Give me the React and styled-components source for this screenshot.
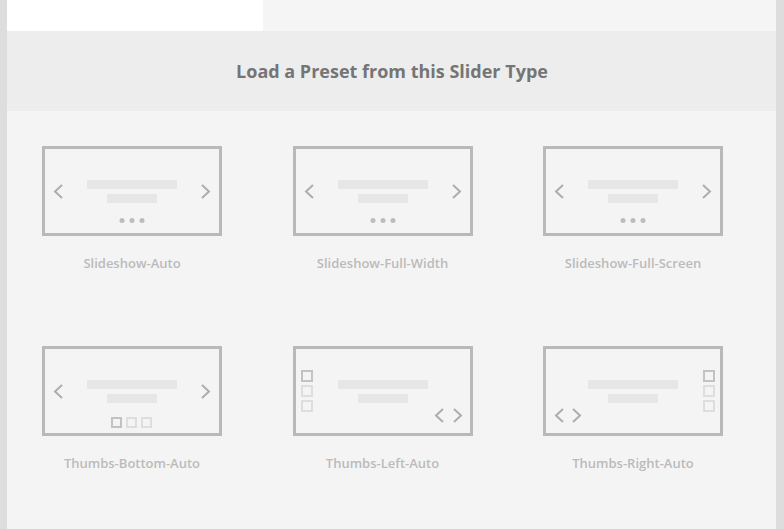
import React from "react";
import styled, { createGlobalStyle } from "styled-components";

const Global = createGlobalStyle`
    html, body {
        margin: 0;
        padding: 0;
        background: #dddddd;
        font-family: "Open Sans", "Liberation Sans", sans-serif;
    }
`

const Panel = styled.div`
    margin: 0 8px 0 7px;
    height: 529px;
    background: #f4f4f4;
    display: flex;
    flex-direction: column;
`
const TabRow = styled.div`
    height: 31px;
    display: flex;
    background: #f5f5f5;
`
const Tab = styled.div`
    width: 256px;
    background: #ffffff;
`
const Header = styled.div`
    height: 80px;
    background: #ededed;
    display: flex;
    align-items: center;
    justify-content: center;
`
const Title = styled.h2`
    margin: 0;
    font-size: 18px;
    font-weight: 700;
    color: #757575;
    padding-left: 1px;
`
const Grid = styled.div`
    display: grid;
    grid-template-columns: repeat(3, 180px);
    column-gap: 70.5px;
    row-gap: 74px;
    padding: 35px 0 0 35px;
`
const Card = styled.div`
    display: flex;
    flex-direction: column;
    align-items: center;
    cursor: pointer;
`
const Frame = styled.div`
    width: 174px;
    height: 84px;
    border: 3px solid #b9b9b9;
    svg {
        display: block;
    }
`
const Label = styled.div`
    margin-top: 18px;
    font-size: 13px;
    line-height: 18px;
    font-weight: 600;
    color: #bbbbbb;
`

const BAR = "#e6e6e6";
const ARROW = "#adadad";

const Chevron = ({ x, y, dir }) => (
    <path
        d={dir === "left" ? `M${x + 8} ${y} L${x + 1} ${y + 6.5} L${x + 8} ${y + 13}` : `M${x} ${y} L${x + 7} ${y + 6.5} L${x} ${y + 13}`}
        fill="none"
        stroke={ARROW}
        strokeWidth="2"
    />
);

const Thumb = ({ x, y, size, active }) => (
    <rect
        x={x + 1}
        y={y + 1}
        width={size - 2}
        height={size - 2}
        fill="none"
        stroke={active ? "#c2c2c2" : "#dedede"}
        strokeWidth="2"
    />
);

const Preview = ({ type }) => (
    <svg width="174" height="84" viewBox="0 0 174 84">
        <rect x="42" y="31" width="90" height="9" fill={BAR} />
        <rect x="62" y="45" width="50" height="9" fill={BAR} />
        {type === "slideshow" && (
            <>
                <Chevron x={9} y={36} dir="left" />
                <Chevron x={157} y={36} dir="right" />
                {[77, 87, 97].map((cx) => (
                    <circle key={cx} cx={cx} cy={71.5} r={2.5} fill="#bcbcbc" />
                ))}
            </>
        )}
        {type === "bottom" && (
            <>
                <Chevron x={9} y={36} dir="left" />
                <Chevron x={157} y={36} dir="right" />
                {[66, 81, 96].map((x, i) => (
                    <Thumb key={x} x={x} y={68} size={11} active={i === 0} />
                ))}
            </>
        )}
        {type === "left" && (
            <>
                {[21, 36, 51].map((y, i) => (
                    <Thumb key={y} x={5} y={y} size={12} active={i === 0} />
                ))}
                <Chevron x={139} y={60} dir="left" />
                <Chevron x={158} y={60} dir="right" />
            </>
        )}
        {type === "right" && (
            <>
                {[21, 36, 51].map((y, i) => (
                    <Thumb key={y} x={157} y={y} size={12} active={i === 0} />
                ))}
                <Chevron x={9} y={60} dir="left" />
                <Chevron x={27} y={60} dir="right" />
            </>
        )}
    </svg>
);

const presets = [
    { name: "Slideshow-Auto", type: "slideshow" },
    { name: "Slideshow-Full-Width", type: "slideshow" },
    { name: "Slideshow-Full-Screen", type: "slideshow" },
    { name: "Thumbs-Bottom-Auto", type: "bottom" },
    { name: "Thumbs-Left-Auto", type: "left" },
    { name: "Thumbs-Right-Auto", type: "right" },
];

const App = () => {
    return (
        <>
            <Global />
            <Panel>
                <TabRow>
                    <Tab />
                </TabRow>
                <Header>
                    <Title>Load a Preset from this Slider Type</Title>
                </Header>
                <Grid>
                    {presets.map((p) => (
                        <Card key={p.name}>
                            <Frame>
                                <Preview type={p.type} />
                            </Frame>
                            <Label>{p.name}</Label>
                        </Card>
                    ))}
                </Grid>
            </Panel>
        </>
    )
};
export default App;
